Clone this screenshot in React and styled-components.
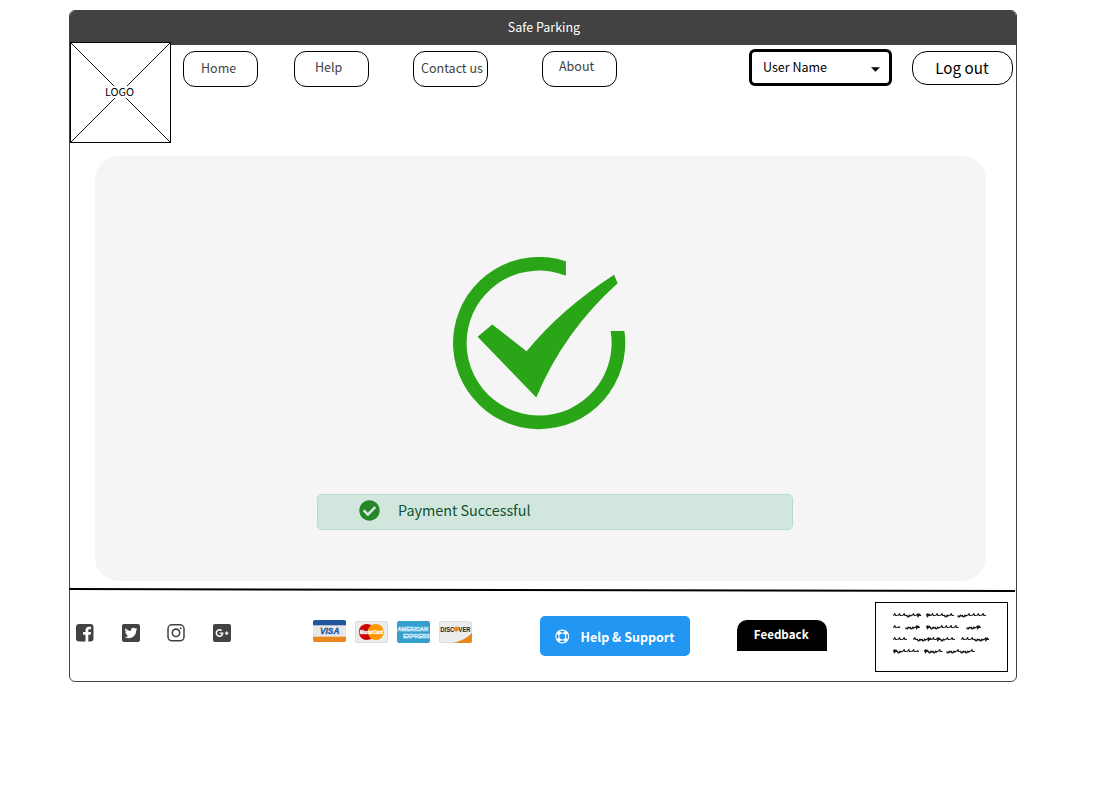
import React from "react";
import styled, { createGlobalStyle } from "styled-components";
import { FaCheckCircle, FaTwitterSquare, FaGooglePlusSquare } from "react-icons/fa";

const GlobalStyle = createGlobalStyle`
  * { box-sizing: border-box; }
  body {
    margin: 0;
    background: #fff;
    font-family: "Noto Sans CJK SC", "Noto Sans", sans-serif;
  }
  svg { display: block; flex: none; }
`;

const Page = styled.div`
  height: 790px;
  padding: 10px 0 0 69px;
`;

const Frame = styled.main`
  width: 948px;
  height: 672px;
  border: 1px solid #424242;
  border-radius: 6px;
  display: flex;
  flex-direction: column;
  background: #fff;
`;

const TitleBar = styled.h1`
  margin: 0;
  height: 34px;
  flex: none;
  padding-left: 2px;
  background: #424242;
  border-radius: 5px 5px 0 0;
  color: #fff;
  font-size: 12.5px;
  font-weight: 400;
  line-height: 31px;
  text-align: center;
`;

const Header = styled.header`
  display: flex;
  align-items: flex-start;
  height: 111px;
  flex: none;
`;

const Logo = styled.div`
  width: 101px;
  height: 101px;
  margin-top: -3px;
`;

const Nav = styled.nav`
  display: flex;
  margin: 6px 0 0 12px;
`;

const NavButton = styled.button`
  width: 75px;
  height: 36px;
  margin: 0 ${(p) => p.$gap}px 0 0;
  padding: 0 0 ${(p) => p.$lift}px ${(p) => p.$indent}px;
  display: flex;
  align-items: center;
  border: 1px solid #000;
  border-radius: 12px;
  background: #fff;
  color: #424242;
  font: inherit;
  font-size: 12.5px;
  line-height: 20px;
  white-space: nowrap;
`;

const UserSelect = styled.button`
  width: 143px;
  height: 37px;
  margin: 4px 20px 0 auto;
  padding: 0 9px 1px 11px;
  display: flex;
  align-items: center;
  justify-content: space-between;
  border: 3px solid #000;
  border-radius: 6px;
  background: #fff;
  color: #000;
  font: inherit;
  font-size: 12.5px;
  line-height: 20px;

  svg { margin-top: 4px; }
`;

const LogoutButton = styled.button`
  width: 101px;
  height: 34px;
  margin: 6px 3px 0 0;
  padding: 0 1px 2px 0;
  border: 1px solid #000;
  border-radius: 15px;
  background: #fff;
  color: #000;
  font: inherit;
  font-size: 15.2px;
  line-height: 24px;
`;

const Panel = styled.section`
  width: 891px;
  height: 425px;
  flex: none;
  margin-left: 25px;
  padding-top: 101px;
  border-radius: 24px;
  background: #f5f5f5;
`;

const SuccessMark = styled.svg`
  width: 174px;
  height: 173px;
  margin-left: 357px;
`;

const Alert = styled.div`
  display: flex;
  align-items: center;
  gap: 18px;
  width: 476px;
  height: 36px;
  margin: 64px 0 0 222px;
  padding: 0 0 3px 41px;
  border: 1px solid #badbcc;
  border-radius: 5px;
  background: #d1e7dd;
  color: #0f5132;
  font-size: 14.35px;
  line-height: 24px;
`;

const AlertText = styled.span`
  padding-bottom: 2px;
`;

const Divider = styled.svg`
  width: 947px;
  height: 6px;
  flex: none;
  margin: 6px 0 0 -1px;
`;

const Footer = styled.footer`
  display: flex;
  align-items: flex-start;
  padding-top: 9px;
`;

const Socials = styled.div`
  display: flex;
  gap: 27.6px;
  width: 243px;
  margin-top: 22px;
  padding-left: 6px;
  color: #424242;
`;

const Cards = styled.div`
  display: flex;
  gap: 9px;
  margin-top: 18px;
`;

const Card = styled.svg`
  width: 33px;
  height: 22px;
  margin-top: ${(p) => p.$drop || 0}px;
  border-radius: 2px;
`;

const SupportButton = styled.button`
  display: flex;
  align-items: center;
  gap: 10.5px;
  width: 150px;
  height: 40px;
  margin: 14px 0 0 68px;
  padding: 2px 0 0 15px;
  border: 0;
  border-radius: 5px;
  background: #2196f3;
  color: #fff;
  font: inherit;
  font-size: 12.5px;
  font-weight: 700;
  line-height: 20px;
  white-space: nowrap;

  svg { margin-top: -2px; }
`;

const FeedbackButton = styled.button`
  width: 90px;
  height: 31px;
  margin: 18px 0 0 47px;
  padding: 0 1.5px 3px 0;
  border: 0;
  border-radius: 10px 10px 0 0;
  background: #000;
  color: #fff;
  font: inherit;
  font-size: 11.6px;
  font-weight: 700;
  line-height: 20px;
`;

const NoteBox = styled.div`
  width: 133px;
  height: 70px;
  margin-left: 48px;
  border: 1px solid #000;
`;

const logoFont = '"Noto Sans CJK SC", sans-serif';
const cardFont = '"Liberation Sans", sans-serif';

const navItems = [
  { label: "Home", gap: 36, indent: 17, lift: 2 },
  { label: "Help", gap: 44, indent: 20, lift: 4 },
  { label: "Contact us", gap: 54, indent: 7, lift: 2 },
  { label: "About", gap: 0, indent: 16, lift: 6 },
];

// Each word of the note is [start x, pen strokes]
const noteLines = [
  { y: 12.3, words: [[17, "nnnunx"], [50, "xnnnun"], [82, "uunnnn"]] },
  { y: 24.3, words: [[17, "nh"], [30, "uux"], [50, "xuunnnn"], [91, "uux"]] },
  { y: 36.3, words: [[17, "nnn"], [37, "nuuxnxunn"], [85, "nnnuux"]] },
  { y: 48.3, words: [[17, "xunnnh"], [48, "xuun"], [71, "uunuun"]] },
];

const strokeShapes = {
  n: "l.9-.3l1-1.4l.4 1.5l.5 .4l1.900-.2",
  u: "l.1 1.3l1.200 .4l1-1.900l.5 1l1.800-.8",
  x: "l1.900-1.500l-.6 3l2-2.600l.1 1.100h1.300",
  h: "l1.500-.4l.7 .9",
};

function wordPath(x, y, strokes) {
  return `M${x} ${y}` + [...strokes].map((s) => strokeShapes[s]).join("");
}

function Note() {
  return (
    <svg width="131" height="68" viewBox="0 0 131 68" fill="none" stroke="#111" strokeWidth="1.15" strokeLinejoin="round">
      {noteLines.flatMap((l) =>
        l.words.map(([x, strokes]) => <path key={`${x}-${l.y}`} d={wordPath(x, l.y, strokes)} />)
      )}
    </svg>
  );
}

function LogoBox() {
  return (
    <Logo>
      <svg width="101" height="101" viewBox="0 0 101 101">
        <rect x=".5" y=".5" width="100" height="100" fill="#fff" stroke="#000" />
        <path d="M1 1l100 100M101 0L0 101" stroke="#000" strokeWidth=".9" />
        <rect x="34" y="44" width="32" height="12" fill="#fff" />
        <text x="49.5" y="54" textAnchor="middle" fontFamily={logoFont} fontSize="10.8" fill="#000">LOGO</text>
      </svg>
    </Logo>
  );
}

function Facebook() {
  return (
    <svg width="18" height="18" viewBox="0 0 18 18">
      <rect width="17.5" height="17.5" rx="3.2" fill="currentColor" />
      <path d="M9.5 18v-7.2H7.1V8h2.4V6.2C9.5 4 10.8 2.7 12.8 2.7h2.2v2.6h-1.5c-1 0-1.2.5-1.2 1.2V8H15l-.4 2.8h-2.3V18z" fill="#fff" />
    </svg>
  );
}

function Instagram() {
  return (
    <svg width="18" height="18" viewBox="0 0 18 18" fill="none" stroke="currentColor">
      <rect x="1" y=".8" width="16" height="16" rx="4" strokeWidth="1.5" />
      <circle cx="9" cy="8.8" r="3.7" strokeWidth="1.6" />
      <circle cx="13.7" cy="4.2" r="1" fill="currentColor" stroke="none" />
    </svg>
  );
}

function LifeRing() {
  return (
    <svg width="15" height="15" viewBox="0 0 15 15" fill="none" stroke="#fff">
      <circle cx="7.3" cy="7.5" r="6.4" strokeWidth="1.1" />
      <circle cx="7.3" cy="7.5" r="3.5" strokeWidth="1.1" />
      <path d="M2.7 2.9l2.2 2.2M11.9 2.9L9.7 5.1M2.7 12.1l2.2-2.2M11.9 12.1L9.7 9.9" strokeWidth="3.6" />
    </svg>
  );
}

function PaymentCards() {
  return (
    <Cards>
      <Card viewBox="0 0 33 22">
        <rect width="33" height="22" fill="#e8e8e8" />
        <rect width="33" height="5.3" fill="#20569f" />
        <rect y="16.7" width="33" height="5.3" fill="#e9871c" />
        <text x="16.7" y="14.2" textAnchor="middle" textLength="19.5" lengthAdjust="spacingAndGlyphs" fontFamily={cardFont} fontWeight="700" fontStyle="italic" fontSize="9" fill="#20569f" stroke="#20569f" strokeWidth=".3">VISA</text>
        <path d="M6.3 7.7h2.2l.6 2.6c-.6-1.2-1.5-2.1-2.8-2.6z" fill="#e9871c" />
      </Card>
      <Card $drop={1} viewBox="0 0 33 22">
        <rect x=".5" y=".5" width="32" height="21" rx="1.5" fill="#ececec" stroke="#ddd" />
        <circle cx="11.8" cy="11" r="8" fill="#c00" />
        <circle cx="20.8" cy="11" r="8" fill="#f90" />
        <text x="4.7" y="12.8" textLength="23" lengthAdjust="spacingAndGlyphs" fontFamily={cardFont} fontWeight="700" fontStyle="italic" fontSize="5" fill="#fff" stroke="#fff" strokeWidth=".3">MasterCard</text>
      </Card>
      <Card $drop={1} viewBox="0 0 33 22">
        <rect width="33" height="22" fill="#35a0d0" />
        <g fontFamily={cardFont} fontWeight="700" fontSize="5.6" fill="#35a0d0" stroke="#e5f4fb" strokeWidth=".5">
          <text x=".5" y="10" textLength="30.5" lengthAdjust="spacingAndGlyphs">AMERICAN</text>
          <text x="6" y="16.5" textLength="26.7" lengthAdjust="spacingAndGlyphs">EXPRESS</text>
        </g>
      </Card>
      <Card $drop={1} viewBox="0 0 33 22">
        <rect x=".5" y=".5" width="32" height="21" rx="1.5" fill="#ececec" stroke="#ddd" />
        <path d="M14 22c8-2 14-5 19-10v10z" fill="#e9871c" />
        <g fontFamily={cardFont} fontWeight="700" fontSize="7" fill="#222">
          <text x="1.3" y="10.5" textLength="14" lengthAdjust="spacingAndGlyphs">DISC</text>
          <text x="19.6" y="10.5" textLength="12" lengthAdjust="spacingAndGlyphs">VER</text>
        </g>
        <circle cx="17.4" cy="8" r="2.5" fill="#e9871c" />
      </Card>
    </Cards>
  );
}

export default function App() {
  return (
    <Page>
      <GlobalStyle />
      <Frame>
        <TitleBar>Safe Parking</TitleBar>
        <Header>
          <LogoBox />
          <Nav>
            {navItems.map((n) => (
              <NavButton key={n.label} $gap={n.gap} $indent={n.indent} $lift={n.lift}>{n.label}</NavButton>
            ))}
          </Nav>
          <UserSelect>
            User Name
            <svg width="9" height="5" viewBox="0 0 9 5"><path d="M0 .2h9L4.5 4.7z" /></svg>
          </UserSelect>
          <LogoutButton>Log out</LogoutButton>
        </Header>
        <Panel>
          <SuccessMark viewBox="-.6 0 174 173" fill="#2ba518">
            <path d="M113.3 4.2A86.1 86.1 0 1 0 171.8 74H158A72.5 72.5 0 1 1 113.3 18.7z" />
            <path d="M25 79.7L39.7 67.4L74 94.3Q108.5 52 161.5 17.7L165 26.3Q111 75 83.7 140.5z" />
          </SuccessMark>
          <Alert>
            <FaCheckCircle size={21} color="#25872a" />
            <AlertText>Payment Successful</AlertText>
          </Alert>
        </Panel>
        <Divider viewBox="0 0 947 6">
          <path d="M0 2L946 4" stroke="#000" strokeWidth="2" />
        </Divider>
        <Footer>
          <Socials>
            <Facebook />
            <FaTwitterSquare size={18} viewBox="0 32 448 448" />
            <Instagram />
            <FaGooglePlusSquare size={18} viewBox="0 32 448 448" />
          </Socials>
          <PaymentCards />
          <SupportButton>
            <LifeRing />
            Help &amp; Support
          </SupportButton>
          <FeedbackButton>Feedback</FeedbackButton>
          <NoteBox><Note /></NoteBox>
        </Footer>
      </Frame>
    </Page>
  );
}
